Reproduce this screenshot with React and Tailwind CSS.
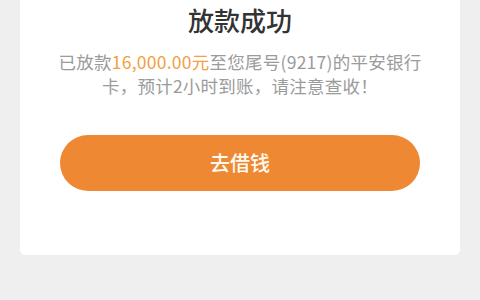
export default function App() {
  return (
    <div
      className="w-[480px] h-[300px] bg-[#efefef] overflow-hidden"
      style={{ fontFamily: '"Noto Sans CJK SC", "Noto Sans", sans-serif' }}
    >
      <div className="mx-[20px] bg-white rounded-b-[5px] pt-[4px] pb-[64px] flex flex-col items-center">
        <h1 className="text-[26px] leading-[32px] font-medium text-[#333333]">放款成功</h1>
        <p className="mt-[14px] w-[368px] text-center text-[17.5px] leading-[24px] tracking-[0.25px] text-[#9b9b9b]">
          已放款<span className="text-[#f0a043]">16,000.00元</span>至您尾号(9217)的平安银行卡，预计2小时到账，请注意查收！
        </p>
        <button className="mt-[37px] w-[360px] h-[56px] rounded-full bg-[#ee8833] text-[#fffaf2] text-[20px] font-medium">
          去借钱
        </button>
      </div>
    </div>
  )
}
